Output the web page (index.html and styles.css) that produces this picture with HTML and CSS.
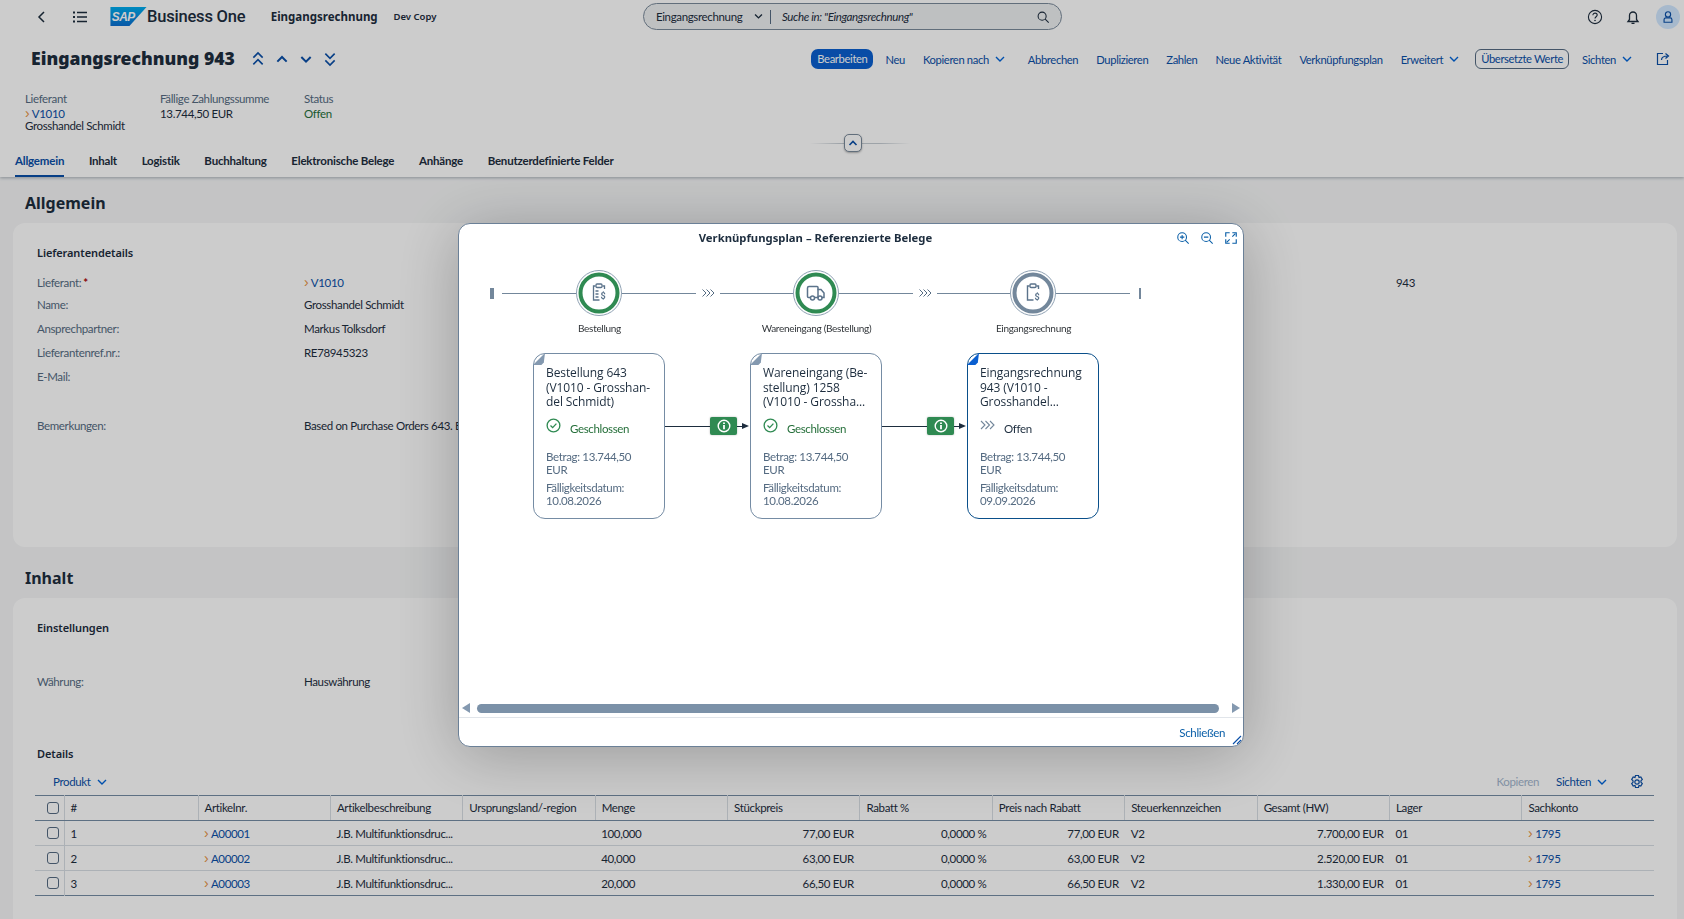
FILE: index.html
```html
<!DOCTYPE html>
<html lang="de">
<head>
<meta charset="utf-8">
<title>Eingangsrechnung 943</title>
<link rel="stylesheet" href="styles.css">
</head>
<body>
<header class="top">
  <div class="shell">
    <svg class="ic back" viewBox="0 0 16 16"><path d="M10 3 5 8l5 5" fill="none" stroke="#1d2d3e" stroke-width="1.5"/></svg>
    <svg class="ic list" viewBox="0 0 16 16"><path d="M5 3.5h10M5 8h10M5 12.5h10" stroke="#1d2d3e" stroke-width="1.3"/><path d="M1 3.5h2M1 8h2M1 12.5h2" stroke="#1d2d3e" stroke-width="2"/></svg>
    <svg class="logo" viewBox="0 0 38 20"><defs><linearGradient id="g" x1="0" y1="0" x2="0" y2="1"><stop offset="0" stop-color="#00aeef"/><stop offset="1" stop-color="#0a6ed1"/></linearGradient></defs><path d="M0 0h38L20 20H0z" fill="url(#g)"/><text x="1.500" y="14.500" class="logotext">SAP</text></svg>
    <span class="brand">Business One</span>
    <span class="app">Eingangsrechnung</span>
    <span class="sys">Dev Copy</span>
    <div class="search">
      <span class="scope">Eingangsrechnung</span>
      <svg class="ic chev" viewBox="0 0 16 16"><path d="m3 5 5 5 5-5" fill="none" stroke="#1d2d3e" stroke-width="2"/></svg>
      <span class="sep"></span>
      <span class="hint">Suche in: "Eingangsrechnung"</span>
      <svg class="ic mag" viewBox="0 0 16 16"><circle cx="7" cy="7" r="4.6" fill="none" stroke="#1d2d3e" stroke-width="1.2"/><path d="m10.5 10.5 4 4" stroke="#1d2d3e" stroke-width="1.3"/></svg>
    </div>
    <svg class="ic help" viewBox="0 0 16 16"><circle cx="8" cy="8" r="6.6" fill="none" stroke="#1d2d3e" stroke-width="1.1"/><path d="M5.9 6.3c0-3 4.3-2.7 4.3-.2 0 1.700-2.200 1.700-2.200 3.500" fill="none" stroke="#1d2d3e" stroke-width="1.100"/><circle cx="8" cy="11.500" r=".8" fill="#1d2d3e"/></svg>
    <svg class="ic bell" viewBox="0 0 16 16"><path d="M3 12.500h10l-1.500-2V6.500a3.500 3.500 0 0 0-7 0v4zM6.500 14.300h3" fill="none" stroke="#1d2d3e" stroke-width="1.300"/></svg>
    <span class="avatar"><svg class="ic" viewBox="0 0 16 16"><circle cx="8" cy="5" r="3" fill="none" stroke="#0a4fa8" stroke-width="1.300"/><path d="M3.500 14V11a2 2 0 0 1 2-2h5a2 2 0 0 1 2 2v3z" fill="none" stroke="#0a4fa8" stroke-width="1.300"/></svg></span>
  </div>

  <div class="titlebar">
    <h1>Eingangsrechnung 943</h1>
    <div class="pager">
      <svg class="ic" viewBox="0 0 12 12"><path d="m2.500 5 3.500-3.500L9.500 5M2.500 10 6 6.500 9.500 10" fill="none" stroke="#0a4fa8" stroke-width="1.200"/></svg>
      <svg class="ic" viewBox="0 0 12 12"><path d="M2.500 8 6 4.500 9.500 8" fill="none" stroke="#0a4fa8" stroke-width="1.500"/></svg>
      <svg class="ic" viewBox="0 0 12 12"><path d="M2.500 4.500 6 8l3.500-3.500" fill="none" stroke="#0a4fa8" stroke-width="1.500"/></svg>
      <svg class="ic" viewBox="0 0 12 12"><path d="m2.500 2 3.500 3.500L9.500 2M2.500 7 6 10.500 9.500 7" fill="none" stroke="#0a4fa8" stroke-width="1.200"/></svg>
    </div>
    <nav class="actions">
      <a class="btn-primary">Bearbeiten</a>
      <a>Neu</a>
      <a class="menu">Kopieren nach <svg class="ic caret" viewBox="0 0 10 10"><path d="m1 3 4 4 4-4" fill="none" stroke="#0064d9" stroke-width="1.400"/></svg></a>
      <a>Abbrechen</a>
      <a>Duplizieren</a>
      <a>Zahlen</a>
      <a>Neue Aktivität</a>
      <a>Verknüpfungsplan</a>
      <a class="menu">Erweitert <svg class="ic caret" viewBox="0 0 10 10"><path d="m1 3 4 4 4-4" fill="none" stroke="#0064d9" stroke-width="1.400"/></svg></a>
      <a class="btn-outline">Übersetzte Werte</a>
      <a class="menu">Sichten <svg class="ic caret" viewBox="0 0 10 10"><path d="m1 3 4 4 4-4" fill="none" stroke="#0064d9" stroke-width="1.400"/></svg></a>
      <svg class="ic share" viewBox="0 0 16 16"><path d="M8 2.500H2.500v11h10V9" fill="none" stroke="#0a4fa8" stroke-width="1.200"/><path d="M6.500 9c0-3 2-4 6-4M10.500 2.500 13.500 5l-3 2.500" fill="none" stroke="#0a4fa8" stroke-width="1.200"/></svg>
    </nav>
  </div>

  <div class="attrs">
    <div class="attr attr-a"><span class="lbl">Lieferant</span><span><i class="arrow">›</i> <a class="link">V1010</a></span><span>Grosshandel Schmidt</span></div>
    <div class="attr attr-b"><span class="lbl">Fällige Zahlungssumme</span><span>13.744,50 EUR</span></div>
    <div class="attr"><span class="lbl">Status</span><span class="ok">Offen</span></div>
  </div>

  <div class="collapse"><span class="collapse-btn"><svg class="ic" viewBox="0 0 12 12"><path d="M2.500 8 6 4.500 9.500 8" fill="none" stroke="#0a4fa8" stroke-width="1.600"/></svg></span></div>

  <div class="tabs">
    <span class="tab on">Allgemein</span><span class="tab">Inhalt</span><span class="tab">Logistik</span><span class="tab">Buchhaltung</span><span class="tab">Elektronische Belege</span><span class="tab">Anhänge</span><span class="tab">Benutzerdefinierte Felder</span>
  </div>
</header>

<main class="content">
  <h2>Allgemein</h2>
  <section class="card card-general">
    <h3>Lieferantendetails</h3>
    <div class="twocol">
      <div class="form">
        <div class="row first"><span class="lbl">Lieferant:<b class="req">*</b></span><span class="val"><i class="arrow">›</i> <a class="link">V1010</a></span></div>
        <div class="row"><span class="lbl">Name:</span><span class="val">Grosshandel Schmidt</span></div>
        <div class="row"><span class="lbl">Ansprechpartner:</span><span class="val">Markus Tolksdorf</span></div>
        <div class="row"><span class="lbl">Lieferantenref.nr.:</span><span class="val">RE78945323</span></div>
        <div class="row"><span class="lbl">E-Mail:</span><span class="val"></span></div>
        <div class="row gap"><span class="lbl">Bemerkungen:</span><span class="val nowrap">Based on Purchase Orders 643. Based on Goods Receipt</span></div>
      </div>
      <div class="docno">943</div>
    </div>
  </section>

  <h2 class="h-inhalt">Inhalt</h2>
  <section class="card card-content">
    <h3>Einstellungen</h3>
    <div class="row cur"><span class="lbl">Währung:</span><span class="val">Hauswährung</span></div>
    <h3 class="h-details">Details</h3>
    <div class="tbar">
      <a class="menu">Produkt <svg class="ic caret" viewBox="0 0 10 10"><path d="m1 3 4 4 4-4" fill="none" stroke="#0064d9" stroke-width="1.400"/></svg></a>
      <span class="spacer"></span>
      <a class="disabled">Kopieren</a>
      <a class="menu">Sichten <svg class="ic caret" viewBox="0 0 10 10"><path d="m1 3 4 4 4-4" fill="none" stroke="#0064d9" stroke-width="1.400"/></svg></a>
      <svg class="ic gear" viewBox="0 0 16 16"><path d="M6.500 1.500h3l.5 2 1.800-.6 1.500 2.600-1.400 1.400.1.600-.1.600 1.400 1.400-1.500 2.600-1.800-.6-.5 2h-3l-.5-2-1.800.6-1.500-2.600 1.400-1.400-.1-.6.100-.6-1.400-1.400 1.500-2.600 1.800.6z" fill="none" stroke="#0a4fa8" stroke-width="1.200"/><circle cx="8" cy="8" r="2.200" fill="none" stroke="#0a4fa8" stroke-width="1.200"/></svg>
    </div>
    <table class="grid">
      <thead><tr><th class="c-box"><span class="box"></span></th><th class="c-no">#</th><th>Artikelnr.</th><th>Artikelbeschreibung</th><th>Ursprungsland/-region</th><th>Menge</th><th>Stückpreis</th><th>Rabatt %</th><th>Preis nach Rabatt</th><th>Steuerkennzeichen</th><th>Gesamt (HW)</th><th>Lager</th><th>Sachkonto</th></tr></thead>
      <tbody>
        <tr><td><span class="box"></span></td><td>1</td><td><i class="arrow">›</i> <a class="link">A00001</a></td><td>J.B. Multifunktionsdruc...</td><td></td><td>100,000</td><td class="r">77,00 EUR</td><td class="r">0,0000 %</td><td class="r">77,00 EUR</td><td>V2</td><td class="r">7.700,00 EUR</td><td>01</td><td><i class="arrow">›</i> <a class="link">1795</a></td></tr>
        <tr><td><span class="box"></span></td><td>2</td><td><i class="arrow">›</i> <a class="link">A00002</a></td><td>J.B. Multifunktionsdruc...</td><td></td><td>40,000</td><td class="r">63,00 EUR</td><td class="r">0,0000 %</td><td class="r">63,00 EUR</td><td>V2</td><td class="r">2.520,00 EUR</td><td>01</td><td><i class="arrow">›</i> <a class="link">1795</a></td></tr>
        <tr><td><span class="box"></span></td><td>3</td><td><i class="arrow">›</i> <a class="link">A00003</a></td><td>J.B. Multifunktionsdruc...</td><td></td><td>20,000</td><td class="r">66,50 EUR</td><td class="r">0,0000 %</td><td class="r">66,50 EUR</td><td>V2</td><td class="r">1.330,00 EUR</td><td>01</td><td><i class="arrow">›</i> <a class="link">1795</a></td></tr>
      </tbody>
    </table>
  </section>
</main>

<div class="overlay"></div>
<div class="dialog">
  <div class="dlg-head">
    <span class="dlg-title">Verknüpfungsplan – Referenzierte Belege</span>
    <div class="dlg-tools">
      <svg class="ic" viewBox="0 0 16 16"><circle cx="7" cy="7" r="5" fill="none" stroke="#0a5fa8" stroke-width="1.200"/><path d="m10.500 10.500 4 4M4.500 7h5M7 4.500v5" stroke="#0a5fa8" stroke-width="1.200"/></svg>
      <svg class="ic" viewBox="0 0 16 16"><circle cx="7" cy="7" r="5" fill="none" stroke="#0a5fa8" stroke-width="1.200"/><path d="m10.500 10.500 4 4M4.500 7h5" stroke="#0a5fa8" stroke-width="1.200"/></svg>
      <svg class="ic" viewBox="0 0 16 16"><path d="M2 6.500V2h4.500M14 9.500V14H9.500M9.500 2H14v4.500M6.500 14H2V9.500" fill="none" stroke="#0a5fa8" stroke-width="1.300"/><path d="m9.500 6.500 3.500-3.500M6.500 9.500 3 13" stroke="#0a5fa8" stroke-width="1.300"/></svg>
    </div>
  </div>

  <div class="lane">
    <span class="tick"></span><span class="line l74"></span>
    <svg class="node" viewBox="0 0 46 46"><circle cx="23" cy="23" r="22.500" fill="#fff" stroke="#8fa1b3"/><circle cx="23" cy="23" r="18.500" fill="#fff" stroke="#2f8a52" stroke-width="4"/><g fill="none" stroke="#5b738b" stroke-width="1.300"><path d="M26.500 16h2v3M19.500 16h-2v14h6"/><rect x="20" y="14" width="6" height="3.500" rx="1"/><path d="M19.500 21h3M19.500 24h3M19.500 27h3"/></g><text x="24.500" y="29" class="dollar">$</text></svg>
    <span class="line l74"></span><svg class="chevs" viewBox="0 0 24 10"><path d="m6.500 1.500 3.500 3.500-3.500 3.500M10.500 1.500 14 5l-3.500 3.500M14.500 1.500 18 5l-3.500 3.500" fill="none" stroke="#556b82"/></svg><span class="line l73"></span>
    <svg class="node" viewBox="0 0 46 46"><circle cx="23" cy="23" r="22.500" fill="#fff" stroke="#8fa1b3"/><circle cx="23" cy="23" r="18.500" fill="#fff" stroke="#2f8a52" stroke-width="4"/><g fill="none" stroke="#5b738b" stroke-width="1.500"><path d="M17.500 27.500h-2a1 1 0 0 1-1-1v-8.500a1.500 1.500 0 0 1 1.500-1.500h8a1 1 0 0 1 1 1v10h-3"/><path d="M24.500 19.500h3.500l3 3.500v4.500h-2M25 27.500h-.5"/><circle cx="19.500" cy="28" r="2"/><circle cx="27" cy="28" r="2"/></g></svg>
    <span class="line l74"></span><svg class="chevs" viewBox="0 0 24 10"><path d="m6.500 1.500 3.500 3.500-3.500 3.500M10.500 1.500 14 5l-3.500 3.500M14.500 1.500 18 5l-3.500 3.500" fill="none" stroke="#556b82"/></svg><span class="line l73"></span>
    <svg class="node" viewBox="0 0 46 46"><circle cx="23" cy="23" r="22.500" fill="#fff" stroke="#8fa1b3"/><circle cx="23" cy="23" r="18.500" fill="#fff" stroke="#73879b" stroke-width="4"/><g fill="none" stroke="#5b738b" stroke-width="1.400"><path d="M26.500 16h2v3M19.500 16h-2v14h6"/><rect x="20" y="14" width="6" height="3.500" rx="1"/></g><text x="24.500" y="30" class="dollar">$</text></svg>
    <span class="line l74"></span><span class="tick thin"></span>
  </div>

  <div class="lane-labels"><span>Bestellung</span><span>Wareneingang (Bestellung)</span><span>Eingangsrechnung</span></div>

  <div class="flow">
    <article class="doc">
      <span class="fold"></span>
      <div class="doc-title">Bestellung 643<br>(V1010 - Grosshan-<br>del Schmidt)</div>
      <div class="doc-state good"><svg class="ic" viewBox="0 0 16 16"><circle cx="8" cy="8" r="6.800" fill="none" stroke="#2f8a52" stroke-width="1.400"/><path d="m4.800 8 2.300 2.300 4-4.300" fill="none" stroke="#2f8a52" stroke-width="1.400"/></svg><span>Geschlossen</span></div>
      <div class="doc-meta">Betrag: 13.744,50<br>EUR</div>
      <div class="doc-meta due">Fälligkeitsdatum:<br>10.08.2026</div>
    </article>
    <div class="conn"><span class="badge"><svg class="ic" viewBox="0 0 16 16"><circle cx="8" cy="8" r="5.800" fill="none" stroke="#fff" stroke-width="1.400"/><path d="M8 7v4.200M8 4.600v1.500" stroke="#fff" stroke-width="1.800"/></svg></span></div>
    <article class="doc">
      <span class="fold"></span>
      <div class="doc-title">Wareneingang (Be-<br>stellung) 1258<br>(V1010 - Grossha...</div>
      <div class="doc-state good"><svg class="ic" viewBox="0 0 16 16"><circle cx="8" cy="8" r="6.800" fill="none" stroke="#2f8a52" stroke-width="1.400"/><path d="m4.800 8 2.300 2.300 4-4.300" fill="none" stroke="#2f8a52" stroke-width="1.400"/></svg><span>Geschlossen</span></div>
      <div class="doc-meta">Betrag: 13.744,50<br>EUR</div>
      <div class="doc-meta due">Fälligkeitsdatum:<br>10.08.2026</div>
    </article>
    <div class="conn"><span class="badge"><svg class="ic" viewBox="0 0 16 16"><circle cx="8" cy="8" r="5.800" fill="none" stroke="#fff" stroke-width="1.400"/><path d="M8 7v4.200M8 4.600v1.500" stroke="#fff" stroke-width="1.800"/></svg></span></div>
    <article class="doc current">
      <span class="fold"></span>
      <div class="doc-title">Eingangsrechnung<br>943 (V1010 -<br>Grosshandel...</div>
      <div class="doc-state"><svg class="ic" viewBox="0 0 15 15"><path d="m1 3 4 4-4 4M5.500 3l4 4-4 4M10 3l4 4-4 4" fill="none" stroke="#73879b" stroke-width="1.100"/></svg><span>Offen</span></div>
      <div class="doc-meta">Betrag: 13.744,50<br>EUR</div>
      <div class="doc-meta due">Fälligkeitsdatum:<br>09.09.2026</div>
    </article>
  </div>

  <div class="scroll"><span class="sc-l"></span><span class="sc-bar"></span><span class="sc-r"></span></div>
  <div class="dlg-foot"><a>Schließen</a><svg class="grip" viewBox="0 0 10 10"><path d="M1 9 9 1M5 9l4-4" stroke="#0a4fa8" stroke-width="1.100"/></svg></div>
</div>
</body>
</html>
```

FILE: styles.css
```css
* { box-sizing: border-box; }
html, body { margin: 0; height: 100%; overflow: hidden; }
body { background: #f5f6f7; color: #1d2d3e; font: 11.500px/15px Lato, "Liberation Sans", sans-serif; letter-spacing: -.35px; }
h1, h2, h3 { margin: 0; font-family: "Noto Sans", sans-serif; letter-spacing: 0; }
a { color: #0a4fa8; }
i { font-style: normal; }
.ic { display: block; width: 16px; height: 16px; flex: none; }
.top { position: relative; height: 177px; background: #fff; box-shadow: 0 1px 3px rgba(30,50,70,.35); }

.shell { height: 33px; display: flex; align-items: center; padding-left: 34px; padding-right: 4px; }
.back { margin-right: 22px; }
.list { margin-right: 22px; }
.logo { width: 37px; height: 19px; flex: none; margin-right: 0; }
.logotext { font: italic 700 12.500px "Liberation Sans", sans-serif; letter-spacing: -.6px; fill: #fff; }
.brand { font: 500 16.500px Roboto, sans-serif; letter-spacing: -.2px; margin-left: 0; width: 124px; }
.app { font: 700 11.500px "Noto Sans", sans-serif; letter-spacing: 0; width: 123px; }
.sys { font: 600 9.500px "Noto Sans", sans-serif; letter-spacing: 0; width: 250px; }
.search { width: 420px; height: 27px; display: flex; align-items: center; border: 1px solid #7a8a9a; border-radius: 14px; background: #eef0f2; padding: 0 11px 0 12px; }
.scope { width: 90px; }
.chev { width: 11px; height: 11px; margin-left: 7px; }
.sep { width: 1px; height: 14px; background: #556b82; margin: 0 11px 0 6px; }
.hint { flex: 1; font-style: italic; }
.mag { width: 14px; height: 14px; }
.help { margin-left: 525px; }
.bell { margin-left: 22px; }
.avatar { width: 24px; height: 24px; border-radius: 50%; background: #d1e8ff; display: flex; align-items: center; justify-content: center; margin-left: 15px; }
.avatar .ic { width: 14px; height: 14px; }

.titlebar { display: flex; align-items: center; height: 47px; padding: 6px 13px 0 31px; }
h1 { font-size: 17.600px; line-height: 26px; font-weight: 900; width: 219px; white-space: nowrap; margin-top: -3px; }
.pager { display: flex; gap: 8px; width: 100px; margin-top: -1px; }
.actions { display: flex; align-items: center; margin-left: auto; gap: 18px; margin-top: -1px; font-size: 11.200px; }
.actions a { white-space: nowrap; }
.menu { display: inline-flex; align-items: center; gap: 4px; }
.actions .menu { margin-right: 5px; }
.caret { width: 10px; height: 10px; margin-left: 2px; }
.btn-primary { background: #0a5fd0; color: #fff; border-radius: 7px; padding: 2px 6px; height: 20px; margin-right: -6px; }
.btn-outline { border: 1px solid #556b82; border-radius: 6px; padding: 1px 5px; height: 20px; margin: 0 -5px 0 -7px; }
.share { margin-left: 0; }

.attrs { display: flex; padding: 13px 0 0 25px; }
.attr { display: flex; flex-direction: column; line-height: 12.500px; }
.attr .lbl { margin-bottom: 2px; }
.attr-a { width: 135px; }
.attr-b { width: 144px; }
.lbl { color: #556b82; }
.ok { color: #256f3a; }
.arrow { color: #e8913f; font: 400 14px/10px "Liberation Sans", sans-serif; letter-spacing: 0; }
.link { color: #0a4fa8; }

.collapse { position: absolute; left: 810px; top: 143px; width: 100px; height: 1px; background: linear-gradient(90deg, transparent, #c5ccd3 30%, #c5ccd3 70%, transparent); }
.collapse-btn { position: absolute; left: 34px; top: -9px; width: 18px; height: 18px; background: #fff; border: 1px solid #7a8a9a; border-radius: 5px; display: flex; align-items: center; justify-content: center; box-shadow: 0 1px 2px rgba(0,0,0,.3); }
.collapse-btn .ic { width: 12px; height: 12px; }

.tabs { position: absolute; left: 15px; top: 153px; display: flex; gap: 24.700px; font: 700 11.500px/16px Lato, sans-serif; letter-spacing: -.2px; white-space: nowrap; }
.tab { height: 24px; }
.tab.on { color: #0a4fa8; border-bottom: 2px solid #0a4fa8; }

.content { padding: 16px 7px 0 13px; }
h2 { font-size: 16px; line-height: 20px; font-weight: 700; padding-left: 12px; height: 30px; }
.h-inhalt { margin-top: 21px; }
.card { background: #fff; border-radius: 12px; padding: 22px 24px; }
.card-general { height: 324px; }
.card-content { height: 340px; }
h3 { font-size: 11px; line-height: 16px; font-weight: 600; letter-spacing: -.1px; }
.twocol { display: flex; margin-top: 11px; }
.form { width: 500px; }
.row { display: flex; height: 24px; align-items: center; }
.row.first { height: 20px; }
.row .lbl { width: 267px; flex: none; }
.gap { margin-top: 25px; }
.nowrap { white-space: nowrap; }
.docno { margin-left: 859px; line-height: 22px; }
.cur { margin-top: 33px; }
.h-details { margin-top: 53px; }
.tbar { display: flex; align-items: center; height: 27px; padding-left: 16px; padding-right: 8px; gap: 17px; margin-top: 6px; }
.spacer { flex: 1; }
.disabled { color: #a3b5cd; }
.gear { margin-left: 5px; }

.grid { width: 1617px; table-layout: fixed; border-collapse: collapse; margin-left: -2px; border-top: 1px solid #758ca4; border-bottom: 1px solid #758ca4; }
.grid th { height: 25px; font-weight: 400; text-align: left; padding: 0 6px 2px; border-left: 1px solid #d8dee4; border-bottom: 1px solid #758ca4; width: 132.400px; white-space: nowrap; }
.grid th:first-child { border-left: 0; }
.grid th.c-box { width: 29px; padding: 0 6px; }
.grid th.c-no { width: 134px; }
.grid td { height: 25px; padding: 0 6px; border-bottom: 1px solid #d8dee4; white-space: nowrap; overflow: hidden; }
.grid tr:last-child td { border-bottom: 0; }
.grid td:first-child { border-right: 1px solid #d8dee4; }
.grid .r { text-align: right; }
.box { display: block; width: 12px; height: 12px; border: 1px solid #556b82; border-radius: 3px; background: #fff; margin-left: 6px; }
.req { color: #aa0808; margin-left: 2px; }

.overlay { position: fixed; inset: 0; background: rgba(0,0,0,.2); }
.dialog { position: fixed; left: 458px; top: 223px; width: 786px; height: 524px; background: #fff; border: 1px solid #6b8097; border-radius: 12px; display: flex; flex-direction: column; box-shadow: 0 8px 64px rgba(0,0,0,.25); }
.dlg-head { display: flex; align-items: center; height: 28px; padding: 0 5px 0 0; }
.dlg-title { flex: 1; text-align: center; font: 700 11.300px "Noto Sans", sans-serif; letter-spacing: 0; margin-bottom: 2px; }
.dlg-tools { display: flex; justify-content: flex-end; gap: 8px; width: 66px; }
.dlg-tools .ic { width: 14px; height: 14px; margin-left: 2px; }

.lane { display: flex; align-items: center; height: 46px; margin-top: 18px; padding-left: 31px; }
.node { width: 46px; height: 46px; flex: none; }
.dollar { font: 700 9px Roboto, sans-serif; fill: #5b738b; }
.tick { width: 4px; height: 11px; background: #73879b; margin-right: 8px; }
.tick.thin { width: 2px; margin: 0 0 0 9px; }
.line { height: 1px; background: #73879b; }
.l74 { width: 74px; }
.l73 { width: 73px; }
.chevs { width: 24px; height: 10px; flex: none; }
.lane-labels { display: grid; grid-template-columns: repeat(3, 217px); margin: 5px 0 0 32px; text-align: center; font-size: 10px; letter-spacing: -.3px; line-height: 14px; color: #32363a; }
.flow { display: flex; margin: 18px 0 0 74px; }
.doc { position: relative; width: 132px; height: 166px; border: 1px solid #758ca4; border-radius: 12px; padding: 12px 11px 11px 12px; }
.doc.current { border-color: #0a4f8a; }
.fold { position: absolute; left: -1px; top: -1px; width: 12px; height: 12px; background: #8499b0; clip-path: polygon(0 100%, 100% 0, 90% 80%, 70% 100%); }
.current .fold { background: #0a5fd0; }
.doc-title { font: 12px/14.500px "Open Sans", sans-serif; letter-spacing: -.1px; color: #1d2d3e; height: 44px; white-space: nowrap; }
.doc-state { display: flex; align-items: center; margin-top: 8px; height: 18px; padding-top: 2px; }
.doc-state .ic { width: 15px; height: 15px; margin: -5px 9px 0 0; }
.good { color: #256f3a; }
.doc-meta { color: #556b82; line-height: 13px; margin-top: 14px; }
.doc-meta.due { margin-top: 6px; line-height: 12.500px; }
.conn { position: relative; width: 85px; }
.conn::before { content: ""; position: absolute; left: 0; right: 8px; top: 73px; height: 1px; background: #1d2d3e; }
.conn::after { content: ""; position: absolute; right: 1px; top: 70px; border-left: 7px solid #1d2d3e; border-top: 3.500px solid transparent; border-bottom: 3.500px solid transparent; }
.badge { position: absolute; left: 45px; top: 64px; width: 27px; height: 18px; background: #2f8a52; border-radius: 2px; display: flex; align-items: center; justify-content: center; box-shadow: 0 0 2px rgba(0,0,0,.3); }
.scroll { display: flex; align-items: center; margin-top: auto; height: 10px; padding: 0 3px; gap: 7px; }
.sc-bar { flex: 1; height: 9px; background: #7b91a8; border-radius: 5px; margin-right: 6px; }
.sc-l, .sc-r { width: 0; border-top: 5px solid transparent; border-bottom: 5px solid transparent; }
.sc-l { border-right: 8px solid #8499b0; }
.sc-r { border-left: 8px solid #8499b0; }
.dlg-foot { position: relative; height: 29px; margin-top: 4px; border-top: 1px solid #e1e5ea; display: flex; align-items: center; justify-content: flex-end; padding-right: 18px; }
.dlg-foot a { color: #0a5fa8; }
.grip { position: absolute; right: 1px; bottom: 1px; width: 10px; height: 10px; }
```
